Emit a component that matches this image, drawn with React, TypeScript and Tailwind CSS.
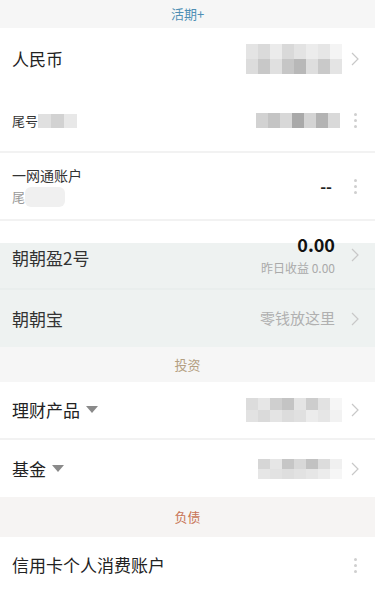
import React from 'react';

const font = { fontFamily: '"Noto Sans CJK SC", "Noto Sans", sans-serif' };

function Mosaic({ rows, cell = 12, h = 15 }: { rows: string[][]; cell?: number; h?: number }) {
  return (
    <div className="flex flex-col">
      {rows.map((r, i) => (
        <div key={i} className="flex">
          {r.map((c, j) => (
            <div key={j} style={{ width: cell, height: h, background: c }} />
          ))}
        </div>
      ))}
    </div>
  );
}

function Chevron() {
  return (
    <svg width="10" height="16" viewBox="0 0 10 16" className="shrink-0">
      <path d="M2 2 L8 8 L2 14" fill="none" stroke="#c8c8c8" strokeWidth="1.2" />
    </svg>
  );
}

function Dots() {
  return (
    <div className="flex w-[10px] shrink-0 flex-col items-center gap-[3px]">
      <div className="h-[3px] w-[3px] rounded-full bg-[#cfcfcf]" />
      <div className="h-[3px] w-[3px] rounded-full bg-[#cfcfcf]" />
      <div className="h-[3px] w-[3px] rounded-full bg-[#cfcfcf]" />
    </div>
  );
}

function Caret() {
  return (
    <svg width="12" height="8" viewBox="0 0 12 8" className="ml-[6px]">
      <path d="M0 0 H12 L6 7 Z" fill="#8a8a8a" />
    </svg>
  );
}

function Header({ text, color, h }: { text: string; color: string; h: string }) {
  return (
    <div className={`flex items-center justify-center bg-[#f6f6f6] text-[13px] ${h} ${color}`}>{text}</div>
  );
}

export default function App() {
  return (
    <div className="w-[375px] h-[592px] overflow-hidden bg-white" style={font}>
      <Header text="活期+" color="text-[#4f8fb5]" h="h-[28px]" />

      <div className="flex h-[62px] items-center pl-[12px] pr-[15px]">
        <span className="flex-1 text-[17px] text-[#222]">人民币</span>
        <div className="mr-[8px]">
          <Mosaic
            rows={[
              ['#e4e4e4', '#dadada', '#ebebeb', '#d9d9d9', '#e3e3e3', '#ececec', '#e6e6e6', '#f4f4f4'],
              ['#dcdcdc', '#c8c8c8', '#e0e0e0', '#c6c6c6', '#b8b8b8', '#dedede', '#c9c9c9', '#e4e4e4'],
            ]}
          />
        </div>
        <Chevron />
      </div>

      <div className="flex h-[63px] items-center pl-[12px] pr-[15px] border-b-2 border-[#f2f2f2]">
        <div className="flex flex-1 items-center text-[13px] text-[#333]">
          尾号
          <Mosaic rows={[['#e0e0e0', '#d2d2d2', '#e8e8e8']]} cell={13} h={14} />
        </div>
        <div className="mr-[10px]">
          <Mosaic rows={[['#d2d2d2', '#c4c4c4', '#d8d8d8', '#a9a9a9', '#d4d4d4', '#b3b3b3', '#d9d9d9']]} />
        </div>
        <Dots />
      </div>

      <div className="flex h-[68px] items-center pl-[12px] pr-[15px] border-b-2 border-[#f2f2f2]">
        <div className="flex flex-1 flex-col">
          <span className="text-[14px] leading-[21px] text-[#333]">一网通账户</span>
          <div className="flex items-center text-[13px] leading-[21px] text-[#999]">
            尾<div className="h-[20px] w-[40px] rounded-[6px] bg-[#f0f0f0]" />
          </div>
        </div>
        <span className="mr-[18px] text-[16px] font-bold text-[#222]">--</span>
        <Dots />
      </div>

      <div className="flex h-[69px] items-center pl-[12px] pr-[15px] border-b-2 border-[#e9eeed] bg-[linear-gradient(to_bottom,white_22px,#eef2f1_22px)]">
        <span className="flex-1 pt-[6px] text-[17px] text-[#333]">朝朝盈2号</span>
        <div className="mr-[15px] flex flex-col items-end pt-[2px]">
          <span className="text-[18px] font-bold leading-[22px] text-[#111]">0.00</span>
          <span className="mt-[2px] text-[12px] leading-[22px] text-[#aaa]">昨日收益 0.00</span>
        </div>
        <Chevron />
      </div>

      <div className="flex h-[57px] items-center bg-[#eef2f1] pl-[12px] pr-[15px]">
        <span className="flex-1 text-[17px] text-[#333]">朝朝宝</span>
        <span className="mr-[15px] text-[15px] text-[#b0b0b0]">零钱放这里</span>
        <Chevron />
      </div>

      <Header text="投资" color="text-[#b49f82]" h="h-[35px]" />

      <div className="flex h-[58px] items-center pl-[12px] pr-[15px] border-b-2 border-[#f2f2f2]">
        <div className="flex flex-1 items-center text-[17px] text-[#222]">
          理财产品<Caret />
        </div>
        <div className="mr-[8px]">
          <Mosaic
            rows={[
              ['#dcdcdc', '#e6e6e6', '#cfcfcf', '#c4c4c4', '#e4e4e4', '#cdcdcd', '#e2e2e2', '#f6f6f6'],
              ['#e2e2e2', '#dadada', '#e4e4e4', '#dcdcdc', '#e0e0e0', '#ececec', '#e6e6e6', '#f2f2f2'],
            ]}
            h={12}
          />
        </div>
        <Chevron />
      </div>

      <div className="flex h-[57px] items-center pl-[12px] pr-[15px]">
        <div className="flex flex-1 items-center text-[17px] text-[#222]">
          基金<Caret />
        </div>
        <div className="mr-[8px]">
          <Mosaic
            rows={[
              ['#d6d6d6', '#e6e6e6', '#c6c6c6', '#d8d8d8', '#c2c2c2', '#dcdcdc', '#f0f0f0'],
              ['#e6e6e6', '#e2e2e2', '#dedede', '#e2e2e2', '#e6e6e6', '#ececec', '#f6f6f6'],
            ]}
            h={10}
          />
        </div>
        <Chevron />
      </div>

      <div className="flex h-[40px] items-center justify-center bg-[#f6f4f3] text-[13px] text-[#c87456]">负债</div>

      <div className="flex h-[56px] items-center pl-[12px] pr-[15px]">
        <span className="flex-1 text-[17px] text-[#222]">信用卡个人消费账户</span>
        <Dots />
      </div>
    </div>
  );
}
